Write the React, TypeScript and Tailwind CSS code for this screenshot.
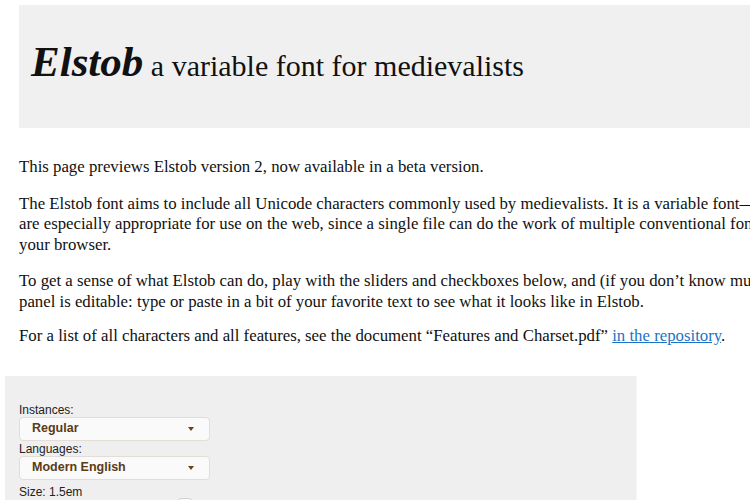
import React from "react";

const serif = "font-['Liberation_Serif','DejaVu_Serif',serif]";

function Select({ value }: { value: string }) {
  return (
    <div className="flex h-[24px] w-[191px] items-center justify-between rounded-[4px] border border-[#e2ddd5] bg-[#fafafa] pl-[12px] pr-[15px]">
      <span className="text-[12.5px] font-bold text-[#5b3a16]">{value}</span>
      <svg width="6" height="4" viewBox="0 0 6 4">
        <path d="M0 0h6L3 4z" fill="#6b4419" />
      </svg>
    </div>
  );
}

export default function App() {
  return (
    <div className="h-[500px] w-[750px] overflow-hidden bg-white text-[#111]">
      <header className="ml-[19px] mt-[5px] flex h-[123px] w-[760px] items-center bg-[#f0f0f0] pl-[12px]">
        <h1 className={`${serif} whitespace-nowrap pb-[8px]`}>
          <span className="text-[43px] font-bold italic">Elstob</span>
          <span className="text-[30px]"> a variable font for medievalists</span>
        </h1>
      </header>

      <main className={`${serif} mt-[29px] w-[900px] pl-[19px] text-[16.8px] leading-[20.5px]`}>
        <p className="mb-[16px] whitespace-nowrap">
          This page previews Elstob version 2, now available in a beta version.
        </p>
        <p className="mb-[16px] whitespace-nowrap">
          The Elstob font aims to include all Unicode characters commonly used by medievalists. It is a variable font—that is,
          <br />
          are especially appropriate for use on the web, since a single file can do the work of multiple conventional fonts, and
          <br />
          your browser.
        </p>
        <p className="mb-[14px] whitespace-nowrap">
          To get a sense of what Elstob can do, play with the sliders and checkboxes below, and (if you don’t know much about
          <br />
          panel is editable: type or paste in a bit of your favorite text to see what it looks like in Elstob.
        </p>
        <p className="whitespace-nowrap">
          For a list of all characters and all features, see the document “Features and Charset.pdf”{" "}
          <a href="#" className="text-[#1a73c8] underline">in the repository</a>.
        </p>
      </main>

      <section className="ml-[5px] mt-[29px] h-[200px] w-[632px] border-r border-[#f6f6f6] bg-[#efefef] pl-[14px] pt-[27px] font-['Liberation_Sans',Arial,sans-serif] text-[12px] text-[#222]">
        <div className="leading-[14px]">Instances:</div>
        <Select value="Regular" />
        <div className="mt-[1px] leading-[14px]">Languages:</div>
        <Select value="Modern English" />
        <div className="mt-[5px] leading-[14px]">Size: 1.5em</div>
        <div className="ml-[159px] mt-[-1px] h-[12px] w-[14px] rounded-[3px] border border-[#d6d2cc] bg-[#fafafa]" />
      </section>
    </div>
  );
}
